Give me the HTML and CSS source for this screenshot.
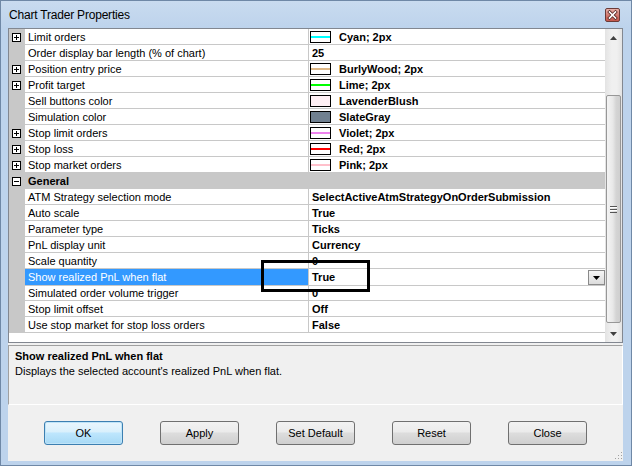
FILE: index.html
```html
<!DOCTYPE html>
<html>
<head>
<meta charset="utf-8">
<link rel="stylesheet" href="styles.css">
</head>
<body>
<div class="window">
  <div class="titlebar">
    <span class="title">Chart Trader Properties</span>
    <span class="close">
      <svg width="13" height="12" viewBox="0 0 13 12"><path d="M3.5 3 L9.5 9 M9.5 3 L3.5 9" stroke="#5a2a26" stroke-width="3.2" stroke-linecap="square"/><path d="M3.5 3 L9.5 9 M9.5 3 L3.5 9" stroke="#fff" stroke-width="1.6" stroke-linecap="square"/></svg>
    </span>
  </div>
  <div class="client">
    <div class="grid">
      <div class="rows">
        <div class="row"><div class="gutter"><svg class="exp" width="9" height="9" viewBox="0 0 9 9"><rect x="0.5" y="0.5" width="8" height="8" fill="#fff" stroke="#000"/><path d="M2 4.5H7M4.5 2V7" stroke="#000"/></svg></div><div class="label">Limit orders</div><div class="value"><span class="swatch"><span class="line c-cyan"></span></span>Cyan; 2px</div></div>
        <div class="row"><div class="gutter"></div><div class="label">Order display bar length (% of chart)</div><div class="value plain">25</div></div>
        <div class="row"><div class="gutter"><svg class="exp" width="9" height="9" viewBox="0 0 9 9"><rect x="0.5" y="0.5" width="8" height="8" fill="#fff" stroke="#000"/><path d="M2 4.5H7M4.5 2V7" stroke="#000"/></svg></div><div class="label">Position entry price</div><div class="value"><span class="swatch"><span class="line c-burly"></span></span>BurlyWood; 2px</div></div>
        <div class="row"><div class="gutter"><svg class="exp" width="9" height="9" viewBox="0 0 9 9"><rect x="0.5" y="0.5" width="8" height="8" fill="#fff" stroke="#000"/><path d="M2 4.5H7M4.5 2V7" stroke="#000"/></svg></div><div class="label">Profit target</div><div class="value"><span class="swatch"><span class="line c-lime"></span></span>Lime; 2px</div></div>
        <div class="row"><div class="gutter"></div><div class="label">Sell buttons color</div><div class="value"><span class="swatch f-blush"></span>LavenderBlush</div></div>
        <div class="row"><div class="gutter"></div><div class="label">Simulation color</div><div class="value"><span class="swatch f-slate"></span>SlateGray</div></div>
        <div class="row"><div class="gutter"><svg class="exp" width="9" height="9" viewBox="0 0 9 9"><rect x="0.5" y="0.5" width="8" height="8" fill="#fff" stroke="#000"/><path d="M2 4.5H7M4.5 2V7" stroke="#000"/></svg></div><div class="label">Stop limit orders</div><div class="value"><span class="swatch"><span class="line c-violet"></span></span>Violet; 2px</div></div>
        <div class="row"><div class="gutter"><svg class="exp" width="9" height="9" viewBox="0 0 9 9"><rect x="0.5" y="0.5" width="8" height="8" fill="#fff" stroke="#000"/><path d="M2 4.5H7M4.5 2V7" stroke="#000"/></svg></div><div class="label">Stop loss</div><div class="value"><span class="swatch"><span class="line c-red"></span></span>Red; 2px</div></div>
        <div class="row"><div class="gutter"><svg class="exp" width="9" height="9" viewBox="0 0 9 9"><rect x="0.5" y="0.5" width="8" height="8" fill="#fff" stroke="#000"/><path d="M2 4.5H7M4.5 2V7" stroke="#000"/></svg></div><div class="label">Stop market orders</div><div class="value"><span class="swatch"><span class="line c-pink"></span></span>Pink; 2px</div></div>
        <div class="row category"><div class="gutter"><svg class="exp" width="9" height="9" viewBox="0 0 9 9"><rect x="0.5" y="0.5" width="8" height="8" fill="#fff" stroke="#000"/><path d="M2 4.5H7" stroke="#000"/></svg></div><div class="cat-label">General</div></div>
        <div class="row"><div class="gutter"></div><div class="label">ATM Strategy selection mode</div><div class="value plain">SelectActiveAtmStrategyOnOrderSubmission</div></div>
        <div class="row"><div class="gutter"></div><div class="label">Auto scale</div><div class="value plain">True</div></div>
        <div class="row"><div class="gutter"></div><div class="label">Parameter type</div><div class="value plain">Ticks</div></div>
        <div class="row"><div class="gutter"></div><div class="label">PnL display unit</div><div class="value plain">Currency</div></div>
        <div class="row"><div class="gutter"></div><div class="label">Scale quantity</div><div class="value plain">0</div></div>
        <div class="row selected"><div class="gutter"></div><div class="label">Show realized PnL when flat</div><div class="value plain edit"><span>True</span><span class="dd"><svg width="7" height="4" viewBox="0 0 7 4"><path d="M0 0H7L3.5 4Z" fill="#000"/></svg></span></div></div>
        <div class="row"><div class="gutter"></div><div class="label">Simulated order volume trigger</div><div class="value plain">0</div></div>
        <div class="row"><div class="gutter"></div><div class="label">Stop limit offset</div><div class="value plain">Off</div></div>
        <div class="row"><div class="gutter"></div><div class="label">Use stop market for stop loss orders</div><div class="value plain">False</div></div>
      </div>
      <div class="scrollbar">
        <div class="sb-btn"><svg width="7" height="4" viewBox="0 0 7 4"><path d="M3.5 0L7 4H0Z" fill="#404040"/></svg></div>
        <div class="sb-track">
          <div class="sb-thumb"><span class="grip"></span></div>
        </div>
        <div class="sb-btn"><svg width="7" height="4" viewBox="0 0 7 4"><path d="M0 0H7L3.5 4Z" fill="#404040"/></svg></div>
      </div>
    </div>
    <div class="desc">
      <div class="desc-title">Show realized PnL when flat</div>
      <div class="desc-text">Displays the selected account's realized PnL when flat.</div>
    </div>
    <div class="buttons">
      <button class="btn default">OK</button>
      <button class="btn">Apply</button>
      <button class="btn">Set Default</button>
      <button class="btn">Reset</button>
      <button class="btn">Close</button>
    </div>
    <div class="sizegrip"></div>
  </div>
  <div class="highlight-box"></div>
</div>
</body>
</html>
```

FILE: styles.css
```css
html, body {
  margin: 0;
  padding: 0;
  background: #ffffff;
}
body {
  font-family: "Liberation Sans", Arial, sans-serif;
  font-size: 11px;
  color: #000;
}
.window {
  position: relative;
  width: 632px;
  height: 466px;
  box-sizing: border-box;
  border: 1px solid #6f88a6;
  padding: 0 8px 4px 7px;
  background: #bdd3ec;
  display: flex;
  flex-direction: column;
}
.titlebar {
  height: 27px;
  flex: none;
  display: flex;
  align-items: flex-start;
  justify-content: space-between;
  margin: 0 -8px 0 -7px;
  padding: 0 11px 0 8px;
  background: linear-gradient(#c9dbef, #bdd3ec);
}
.title {
  font-size: 12px;
  line-height: 14px;
  margin-top: 7px;
  letter-spacing: -0.2px;
  color: #000;
}
.close {
  margin-top: 7px;
  width: 13px;
  height: 12px;
  border: 1px solid #6b3b37;
  border-radius: 2px;
  background: linear-gradient(#eab2aa, #d0766c 55%, #c4574c);
  display: flex;
}
.client {
  position: relative;
  flex: 1;
  background: #f0f0f0;
  display: flex;
  flex-direction: column;
}
.grid {
  height: 315px;
  box-sizing: border-box;
  border: 1px solid #828790;
  background: #fff;
  display: flex;
}
.rows {
  width: 596px;
  flex: none;
}
.row {
  display: grid;
  grid-template-columns: 16px 284px 296px;
  height: 16px;
}
.gutter {
  background: #c8c8c8;
  display: flex;
  padding: 4px 0 0 3px;
  box-sizing: border-box;
}
.exp {
  display: block;
}
.label {
  border-bottom: 1px solid #c8c8c8;
  border-right: 1px solid #c8c8c8;
  padding: 1px 0 0 3px;
  line-height: 14px;
  white-space: nowrap;
  overflow: hidden;
}
.value {
  border-bottom: 1px solid #c8c8c8;
  font-weight: bold;
  line-height: 14px;
  padding-top: 1px;
  display: flex;
  align-items: flex-start;
  padding-left: 1px;
  white-space: nowrap;
}
.value.plain {
  padding-left: 3px;
}
.swatch {
  width: 19px;
  height: 10px;
  border: 1px solid #000;
  margin: 1px 8px 0 0;
  background: #fff;
  position: relative;
  flex: none;
  display: flex;
  align-items: center;
}
.line {
  display: block;
  width: 100%;
  height: 2px;
}
.c-cyan { background: #00ffff; }
.c-burly { background: #deb887; }
.c-lime { background: #00ff00; }
.c-violet { background: #ee82ee; }
.c-red { background: #ff0000; }
.c-pink { background: #ffc0cb; }
.f-blush { background: #fff0f5; }
.f-slate { background: #708090; }
.category {
  background: #c8c8c8;
}
.cat-label {
  grid-column: 2 / 4;
  font-weight: bold;
  padding: 1px 0 0 3px;
  line-height: 14px;
}
.selected .label {
  background: #3399ff;
  color: #fff;
}
.edit {
  justify-content: space-between;
}
.dd {
  width: 15px;
  height: 13px;
  margin-top: 0;
  border: 1px solid #8a8a8a;
  background: linear-gradient(#f6f6f6, #dcdcdc);
  display: flex;
  align-items: center;
  justify-content: center;
}
.scrollbar {
  width: 17px;
  flex: none;
  display: flex;
  flex-direction: column;
  background: linear-gradient(90deg, #e3e3e3, #f0f0f0 40%, #f0f0f0 70%, #e3e3e3);
}
.sb-btn {
  height: 17px;
  display: flex;
  align-items: center;
  justify-content: center;
  flex: none;
}
.sb-track {
  flex: 1;
  display: flex;
  flex-direction: column;
}
.sb-thumb {
  margin: 49px 0 0 1px;
  width: 13px;
  height: 226px;
  border: 1px solid #979797;
  border-radius: 2px;
  background: linear-gradient(90deg, #f4f4f4, #e8e8e8 45%, #d4d4d4 70%, #cfcfcf);
  display: flex;
  align-items: center;
  justify-content: center;
}
.grip {
  width: 7px;
  height: 7px;
  background: repeating-linear-gradient(#555 0 1px, #fff 1px 2px, transparent 2px 3px);
}
.desc {
  margin-top: 2px;
  height: 60px;
  box-sizing: border-box;
  border-top: 1px solid #a0a0a0;
  border-left: 1px solid #a0a0a0;
  border-bottom: 1px solid #ffffff;
  border-right: 1px solid #ffffff;
  padding: 3px 6px;
}
.desc-title {
  font-weight: bold;
  line-height: 14px;
}
.desc-text {
  line-height: 16px;
}
.buttons {
  display: flex;
  gap: 37px;
  padding-left: 36px;
  margin-top: 16px;
}
.btn {
  width: 79px;
  height: 24px;
  font-family: "Liberation Sans", Arial, sans-serif;
  font-size: 11px;
  color: #000;
  border: 1px solid #707070;
  border-radius: 3px;
  background: linear-gradient(#f2f2f2, #ebebeb 45%, #dddddd 50%, #cfcfcf);
  padding: 0;
}
.btn.default {
  border-color: #3c7fb1;
  box-shadow: inset 0 0 0 1px #bfe4f8;
  background: linear-gradient(#eaf6fd, #d9f0fc 45%, #bee6fd 50%, #a7d9f5);
}
.sizegrip {
  position: absolute;
  right: 1px;
  bottom: 2px;
  width: 8px;
  height: 8px;
  background: radial-gradient(circle, #a0a0a0 0.8px, transparent 1px) 0 0 / 3px 3px;
  clip-path: polygon(100% 0, 100% 100%, 0 100%);
}
.highlight-box {
  position: absolute;
  left: 260px;
  top: 259px;
  width: 109px;
  height: 32px;
  box-sizing: border-box;
  border: 3px solid #000;
  pointer-events: none;
}
```
